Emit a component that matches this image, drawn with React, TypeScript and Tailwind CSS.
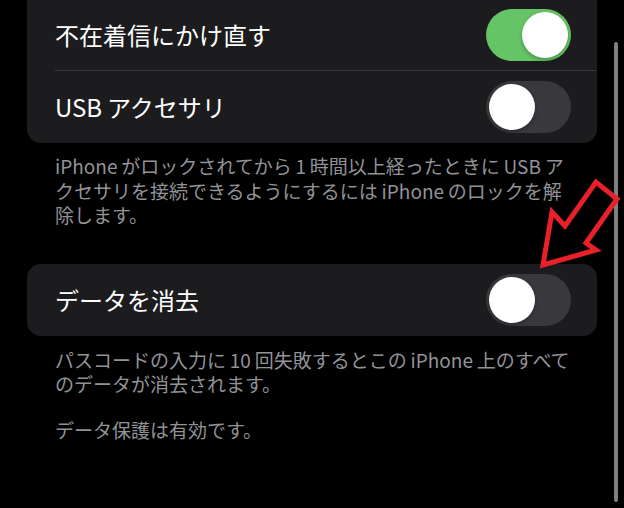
function Toggle({ on }: { on: boolean }) {
  return (
    <div
      className={`flex h-[52px] w-[85px] shrink-0 items-center rounded-full px-[3px] ${
        on ? 'justify-end bg-[#65c466]' : 'justify-start bg-[#39393d]'
      }`}
    >
      <div className="h-[46px] w-[46px] rounded-full bg-white shadow-[0_2px_4px_rgba(0,0,0,0.25)]" />
    </div>
  );
}

function Row({ label, on, h }: { label: string; on: boolean; h: string }) {
  return (
    <div className={`flex items-center justify-between pl-[28px] pr-[26px] ${h}`}>
      <span className="text-[24px] text-white">{label}</span>
      <Toggle on={on} />
    </div>
  );
}

export default function App() {
  return (
    <div className="relative h-[508px] w-[624px] overflow-hidden bg-black font-['Noto_Sans_CJK_JP','Noto_Sans',sans-serif]">
      <div className="px-[27px]">
        {/* lock screen access group, scrolled so its top is cut off */}
        <div className="rounded-b-[14px] bg-[#1c1c1e]">
          <Row label="不在着信にかけ直す" on h="h-[70px]" />
          <div className="ml-[28px] h-px bg-[#38383a]" />
          <Row label={'USB\u2009アクセサリ'} on={false} h="h-[72px]" />
        </div>
        <p className="whitespace-nowrap px-[28px] pt-[11px] text-[19px] leading-[24.5px] text-[#929297]">
          {'iPhone\u2009がロックされてから\u20091\u2009時間以上経ったときに\u2009USB\u2009ア'}
          <br />
          {'クセサリを接続できるようにするには\u2009iPhone\u2009のロックを解'}
          <br />
          除します。
        </p>

        <div className="mt-[36px] rounded-[14px] bg-[#1c1c1e]">
          <Row label="データを消去" on={false} h="h-[72px]" />
        </div>
        <div className="whitespace-nowrap px-[28px] pt-[12px] text-[19px] leading-[24.5px] text-[#929297]">
          <p>
            {'パスコードの入力に\u200910\u2009回失敗するとこの\u2009iPhone\u2009上のすべて'}
            <br />
            のデータが消去されます。
          </p>
          <p className="mt-[21px]">データ保護は有効です。</p>
        </div>
      </div>

      {/* scroll indicator */}
      <div className="absolute right-[6px] top-[42px] h-[460px] w-[4px] rounded-full bg-[#7f7f7f]" />

      {/* red callout arrow */}
      <svg className="absolute left-0 top-0" width="624" height="508" viewBox="0 0 624 508">
        <polygon
          points="543,265 552,212 565,226 596,182 617,199 586,243 596,250"
          fill="none"
          stroke="#e8202a"
          strokeWidth="5"
          strokeLinejoin="miter"
        />
      </svg>
    </div>
  );
}
